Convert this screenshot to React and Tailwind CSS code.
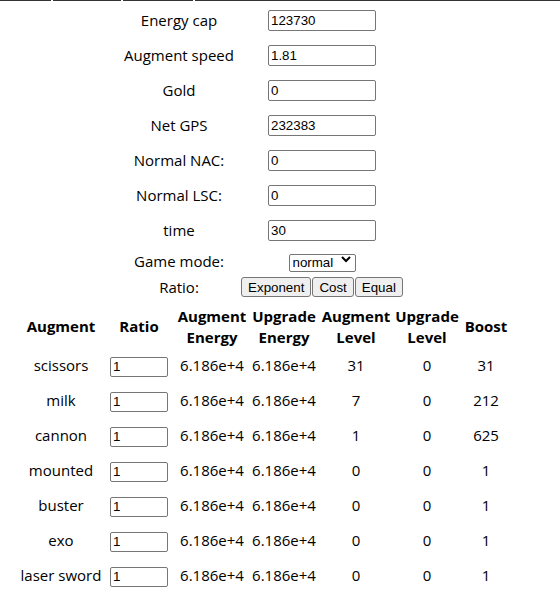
import React, { useState } from 'react';

const fields = [
    ['Energy cap', '123730'],
    ['Augment speed', '1.81'],
    ['Gold', '0'],
    ['Net GPS', '232383'],
    ['Normal NAC:', '0'],
    ['Normal LSC:', '0'],
    ['time', '30'],
];

const augments = [
    ['scissors', 31, 0, 31],
    ['milk', 7, 0, 212],
    ['cannon', 1, 0, 625],
    ['mounted', 0, 0, 1],
    ['buster', 0, 0, 1],
    ['exo', 0, 0, 1],
    ['laser sword', 0, 0, 1],
];

const inputCls = "border border-[#767676] rounded-[2px] bg-white px-[2px] text-[13.33px] text-black font-['Liberation_Sans',Arial,sans-serif] outline-none";
const btnCls = "h-[20px] px-[6px] border border-[#767676] rounded-[3px] bg-[#efefef] text-[13.33px] text-black font-['Liberation_Sans',Arial,sans-serif]";

export default function App() {
    const [values, setValues] = useState(fields.map((f) => f[1]));
    const [ratios, setRatios] = useState(augments.map(() => '1'));
    const [mode, setMode] = useState('normal');

    return (
        <div className="w-[560px] h-[605px] bg-white text-black text-[15px] font-['Open_Sans','Noto_Sans',sans-serif] overflow-hidden">
            <div className="flex gap-[2px]">
                <div className="w-[51px] h-px bg-[#333]" />
                <div className="w-[68px] h-px bg-[#333]" />
                <div className="w-[70px] h-px bg-[#333]" />
                <div className="flex-1 h-px bg-[#333]" />
            </div>

            <div className="ml-[121px] mt-[2px] grid grid-cols-[116px_170px]">
                {fields.map(([label], i) => (
                    <React.Fragment key={label}>
                        <div className="h-[35px] flex items-center justify-center whitespace-nowrap">{label}</div>
                        <div className="h-[35px] flex items-center justify-center">
                            <input
                                className={`${inputCls} w-[108px] h-[21px]`}
                                value={values[i]}
                                onChange={(e) => {
                                    const next = [...values];
                                    next[i] = e.target.value;
                                    setValues(next);
                                }}
                            />
                        </div>
                    </React.Fragment>
                ))}
                <div className="h-[26px] flex items-center justify-center">Game mode:</div>
                <div className="h-[26px] flex items-center justify-center">
                    <div className="relative">
                        <select
                            value={mode}
                            onChange={(e) => setMode(e.target.value)}
                            className="appearance-none w-[67px] h-[18px] pl-[3px] border border-[#767676] rounded-[2px] bg-white text-[13.33px] leading-[16px] font-['Liberation_Sans',Arial,sans-serif]"
                        >
                            <option value="normal">normal</option>
                            <option value="evil">evil</option>
                            <option value="sadistic">sadistic</option>
                        </select>
                        <svg className="absolute right-[5px] top-[5px] pointer-events-none" width="10" height="8" viewBox="0 0 10 8">
                            <path d="M1 2 L5 6 L9 2" fill="none" stroke="#000" strokeWidth="2" />
                        </svg>
                    </div>
                </div>
                <div className="h-[26px] flex items-center justify-center">Ratio:</div>
                <div className="h-[26px] flex items-center justify-center gap-px">
                    <button className={btnCls}>Exponent</button>
                    <button className={btnCls}>Cost</button>
                    <button className={btnCls}>Equal</button>
                </div>
            </div>

            <table className="ml-[18px] table-fixed border-collapse text-center">
                <thead>
                    <tr className="h-[48px] font-bold leading-[21px]">
                        <th className="w-[86px] pt-[5px]">Augment</th>
                        <th className="w-[70px] pt-[5px]">Ratio</th>
                        <th className="w-[76px] pt-[5px]">Augment<br />Energy</th>
                        <th className="w-[68px] pt-[5px]">Upgrade<br />Energy</th>
                        <th className="w-[76px] pt-[5px]">Augment<br />Level</th>
                        <th className="w-[66px] pt-[5px]">Upgrade<br />Level</th>
                        <th className="w-[52px] pt-[5px]">Boost</th>
                    </tr>
                </thead>
                <tbody>
                    {augments.map(([name, level, upLevel, boost], i) => (
                        <tr key={name} className="h-[35px]">
                            <td className="whitespace-nowrap">{name}</td>
                            <td>
                                <input
                                    className={`${inputCls} w-[58px] h-[20px] align-middle`}
                                    value={ratios[i]}
                                    onChange={(e) => {
                                        const next = [...ratios];
                                        next[i] = e.target.value;
                                        setRatios(next);
                                    }}
                                />
                            </td>
                            <td className="whitespace-nowrap">6.186e+4</td>
                            <td className="whitespace-nowrap">6.186e+4</td>
                            <td>{level}</td>
                            <td>{upLevel}</td>
                            <td>{boost}</td>
                        </tr>
                    ))}
                </tbody>
            </table>
        </div>
    );
}
